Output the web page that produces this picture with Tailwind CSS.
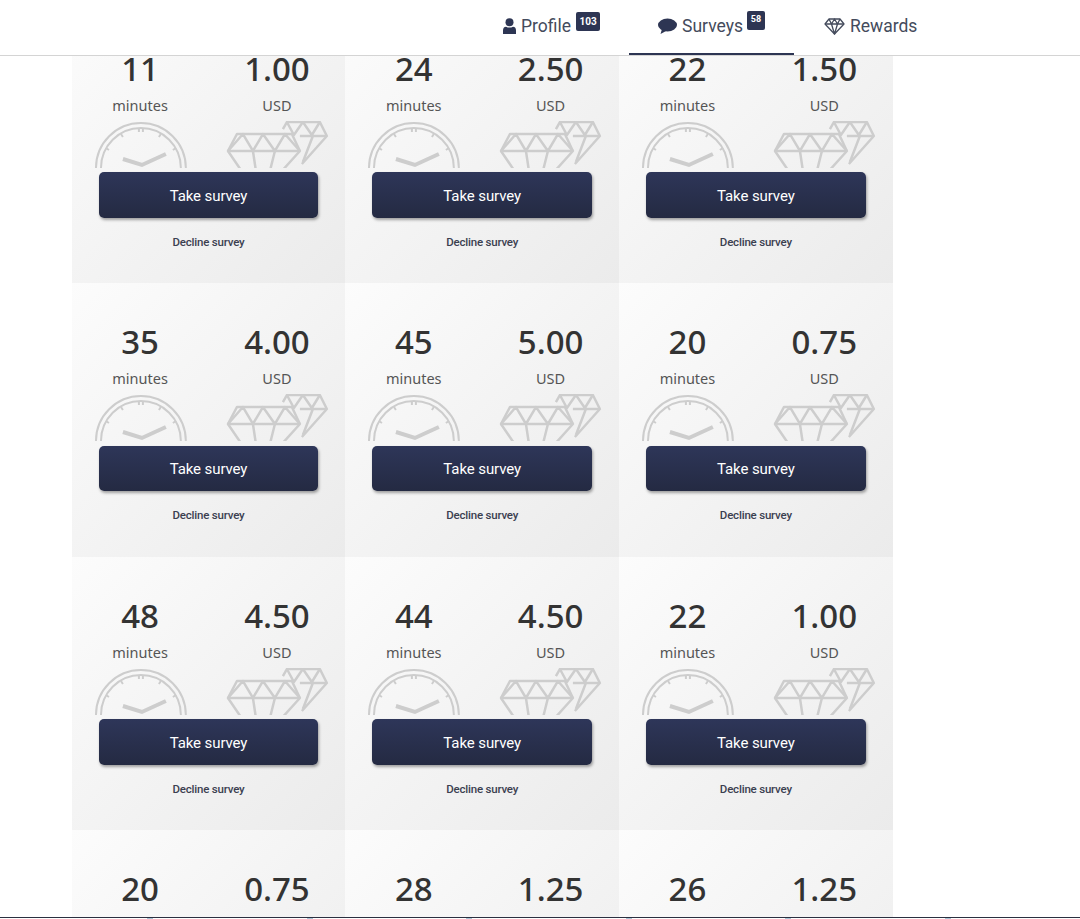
<!DOCTYPE html>
<html>
<head>
<meta charset="UTF-8">
<title>Surveys</title>
<script src="https://cdn.jsdelivr.net/npm/@tailwindcss/browser@4"></script>
</head>
<body class="bg-white font-['Noto_Sans',sans-serif] text-[#333] h-[919px] overflow-hidden">
<svg width="0" height="0" class="absolute">
  <symbol id="clock" viewBox="0 0 137 47">
    <g fill="none" stroke="#cdcdcd" stroke-width="2">
      <circle cx="69" cy="47" r="45"/>
      <circle cx="69" cy="47" r="40"/>
      <path d="M67 7v4M71 7v4M49 13l2 3M89 13l-2 3M34 27l3 2M104 27l-3 2"/>
      <path d="M51 38l19 6 24-11" stroke-width="4"/>
    </g>
  </symbol>
  <symbol id="gems" viewBox="0 0 137 47">
    <g fill="none" stroke="#cdcdcd" stroke-width="2.500" stroke-linejoin="round">
      <path d="M28 13H83L91 30H19Z"/>
      <path d="M19 30L34 13L44 30L54 13L66 30L76 13L91 30"/>
      <path d="M19 30L36 55M44 30L47 50M66 30L61 50M91 30L73 50"/>
      <path d="M74 8L78 1H111L118 15L93 43"/>
      <path d="M78 1L85 14L94 1L103 14L111 1M91 15H118M104 15L94 41"/>
    </g>
  </symbol>
</svg>

<!-- top nav sits over the scrolled list -->
<nav class="absolute top-0 left-0 z-10 w-full h-[56px] bg-white border-b border-[#d4d4d4] flex pl-[474px] text-[17.5px] text-[#444b5c] font-['Roboto',sans-serif]">
  <a class="h-[55px] pb-[3px] px-[29px] flex items-center">
    <svg class="w-[13px] h-[16px] mr-[5px]" viewBox="0 0 13 16" fill="#2d3553"><circle cx="6.500" cy="4.200" r="4"/><path d="M0 16V12.500Q0 9 3 8.700Q6.500 10.500 10 8.700Q13 9 13 12.500V16Z"/></svg>
    <span>Profile</span>
    <span class="ml-[5px] mb-[9px] w-[24px] h-[19px] rounded-[2px] bg-[#2d3553] text-white text-[10px] font-bold flex items-center justify-center">103</span>
  </a>
  <a class="relative h-[55px] pb-[3px] px-[29px] flex items-center">
    <svg class="w-[19px] h-[16px] mr-[5px]" viewBox="0 0 19 16" fill="#2d3553"><ellipse cx="9.500" cy="7" rx="9.500" ry="6.500"/><path d="M4 11L2.500 16L9 12.500Z"/></svg>
    <span>Surveys</span>
    <span class="ml-[4px] mb-[12px] w-[18px] h-[19px] rounded-[2px] bg-[#2d3553] text-white text-[9px] font-bold flex items-center justify-center">58</span>
    <span class="absolute left-0 right-0 bottom-0 h-[2px] bg-[#2d3553]"></span>
  </a>
  <a class="h-[55px] pb-[3px] pl-[30px] flex items-center">
    <svg class="w-[21px] h-[17px] mr-[5px]" viewBox="0 0 21 17" fill="none" stroke="#444b5c" stroke-width="1.300" stroke-linejoin="round"><path d="M5 1H16L20 6L10.500 16L1 6Z"/><path d="M1 6H20M7.500 6L10.500 16L13.500 6L10.500 1L7.500 6M5 1L7.500 6M16 1L13.500 6"/></svg>
    <span>Rewards</span>
  </a>
</nav>

<main class="h-[918px] overflow-hidden pt-[9.5px] pl-[71.7px] border-b border-[#2b3040]">
  <div class="grid grid-cols-3 w-[821px]">

    <div class="h-[273.67px] pt-[36px] bg-linear-to-br from-[#fcfcfc] to-[#ebebeb]">
      <div class="grid grid-cols-2 text-center">
        <div><div class="text-[33px] leading-[46px] font-medium">11</div><div class="mt-[2px] text-[14.5px] leading-[22px] text-[#555]">minutes</div><svg class="mt-[5px] w-full h-[47px]"><use href="#clock"/></svg></div>
        <div><div class="text-[33px] leading-[46px] font-medium">1.00</div><div class="mt-[2px] text-[14.5px] leading-[22px] text-[#555]">USD</div><svg class="mt-[5px] w-full h-[47px]"><use href="#gems"/></svg></div>
      </div>
      <div class="mt-[4.5px] mx-auto pt-[2px] w-[219.500px] h-[45.500px] rounded-[5px] bg-linear-to-b from-[#2e3659] to-[#242a42] shadow-[1px_2px_3px_rgba(0,0,0,0.35)] text-white text-[15px] tracking-[-0.1px] font-['Roboto',sans-serif] flex items-center justify-center">Take survey</div>
      <div class="mt-[13px] text-center text-[11.5px] leading-[22px] font-medium tracking-[-0.2px] text-[#3b4050] font-['Roboto',sans-serif]">Decline survey</div>
    </div>
    <div class="h-[273.67px] pt-[36px] bg-linear-to-br from-[#fcfcfc] to-[#ebebeb]">
      <div class="grid grid-cols-2 text-center">
        <div><div class="text-[33px] leading-[46px] font-medium">24</div><div class="mt-[2px] text-[14.5px] leading-[22px] text-[#555]">minutes</div><svg class="mt-[5px] w-full h-[47px]"><use href="#clock"/></svg></div>
        <div><div class="text-[33px] leading-[46px] font-medium">2.50</div><div class="mt-[2px] text-[14.5px] leading-[22px] text-[#555]">USD</div><svg class="mt-[5px] w-full h-[47px]"><use href="#gems"/></svg></div>
      </div>
      <div class="mt-[4.5px] mx-auto pt-[2px] w-[219.500px] h-[45.500px] rounded-[5px] bg-linear-to-b from-[#2e3659] to-[#242a42] shadow-[1px_2px_3px_rgba(0,0,0,0.35)] text-white text-[15px] tracking-[-0.1px] font-['Roboto',sans-serif] flex items-center justify-center">Take survey</div>
      <div class="mt-[13px] text-center text-[11.5px] leading-[22px] font-medium tracking-[-0.2px] text-[#3b4050] font-['Roboto',sans-serif]">Decline survey</div>
    </div>
    <div class="h-[273.67px] pt-[36px] bg-linear-to-br from-[#fcfcfc] to-[#ebebeb]">
      <div class="grid grid-cols-2 text-center">
        <div><div class="text-[33px] leading-[46px] font-medium">22</div><div class="mt-[2px] text-[14.5px] leading-[22px] text-[#555]">minutes</div><svg class="mt-[5px] w-full h-[47px]"><use href="#clock"/></svg></div>
        <div><div class="text-[33px] leading-[46px] font-medium">1.50</div><div class="mt-[2px] text-[14.5px] leading-[22px] text-[#555]">USD</div><svg class="mt-[5px] w-full h-[47px]"><use href="#gems"/></svg></div>
      </div>
      <div class="mt-[4.5px] mx-auto pt-[2px] w-[219.500px] h-[45.500px] rounded-[5px] bg-linear-to-b from-[#2e3659] to-[#242a42] shadow-[1px_2px_3px_rgba(0,0,0,0.35)] text-white text-[15px] tracking-[-0.1px] font-['Roboto',sans-serif] flex items-center justify-center">Take survey</div>
      <div class="mt-[13px] text-center text-[11.5px] leading-[22px] font-medium tracking-[-0.2px] text-[#3b4050] font-['Roboto',sans-serif]">Decline survey</div>
    </div>

    <div class="h-[273.67px] pt-[36px] bg-linear-to-br from-[#fcfcfc] to-[#ebebeb]">
      <div class="grid grid-cols-2 text-center">
        <div><div class="text-[33px] leading-[46px] font-medium">35</div><div class="mt-[2px] text-[14.5px] leading-[22px] text-[#555]">minutes</div><svg class="mt-[5px] w-full h-[47px]"><use href="#clock"/></svg></div>
        <div><div class="text-[33px] leading-[46px] font-medium">4.00</div><div class="mt-[2px] text-[14.5px] leading-[22px] text-[#555]">USD</div><svg class="mt-[5px] w-full h-[47px]"><use href="#gems"/></svg></div>
      </div>
      <div class="mt-[4.5px] mx-auto pt-[2px] w-[219.500px] h-[45.500px] rounded-[5px] bg-linear-to-b from-[#2e3659] to-[#242a42] shadow-[1px_2px_3px_rgba(0,0,0,0.35)] text-white text-[15px] tracking-[-0.1px] font-['Roboto',sans-serif] flex items-center justify-center">Take survey</div>
      <div class="mt-[13px] text-center text-[11.5px] leading-[22px] font-medium tracking-[-0.2px] text-[#3b4050] font-['Roboto',sans-serif]">Decline survey</div>
    </div>
    <div class="h-[273.67px] pt-[36px] bg-linear-to-br from-[#fcfcfc] to-[#ebebeb]">
      <div class="grid grid-cols-2 text-center">
        <div><div class="text-[33px] leading-[46px] font-medium">45</div><div class="mt-[2px] text-[14.5px] leading-[22px] text-[#555]">minutes</div><svg class="mt-[5px] w-full h-[47px]"><use href="#clock"/></svg></div>
        <div><div class="text-[33px] leading-[46px] font-medium">5.00</div><div class="mt-[2px] text-[14.5px] leading-[22px] text-[#555]">USD</div><svg class="mt-[5px] w-full h-[47px]"><use href="#gems"/></svg></div>
      </div>
      <div class="mt-[4.5px] mx-auto pt-[2px] w-[219.500px] h-[45.500px] rounded-[5px] bg-linear-to-b from-[#2e3659] to-[#242a42] shadow-[1px_2px_3px_rgba(0,0,0,0.35)] text-white text-[15px] tracking-[-0.1px] font-['Roboto',sans-serif] flex items-center justify-center">Take survey</div>
      <div class="mt-[13px] text-center text-[11.5px] leading-[22px] font-medium tracking-[-0.2px] text-[#3b4050] font-['Roboto',sans-serif]">Decline survey</div>
    </div>
    <div class="h-[273.67px] pt-[36px] bg-linear-to-br from-[#fcfcfc] to-[#ebebeb]">
      <div class="grid grid-cols-2 text-center">
        <div><div class="text-[33px] leading-[46px] font-medium">20</div><div class="mt-[2px] text-[14.5px] leading-[22px] text-[#555]">minutes</div><svg class="mt-[5px] w-full h-[47px]"><use href="#clock"/></svg></div>
        <div><div class="text-[33px] leading-[46px] font-medium">0.75</div><div class="mt-[2px] text-[14.5px] leading-[22px] text-[#555]">USD</div><svg class="mt-[5px] w-full h-[47px]"><use href="#gems"/></svg></div>
      </div>
      <div class="mt-[4.5px] mx-auto pt-[2px] w-[219.500px] h-[45.500px] rounded-[5px] bg-linear-to-b from-[#2e3659] to-[#242a42] shadow-[1px_2px_3px_rgba(0,0,0,0.35)] text-white text-[15px] tracking-[-0.1px] font-['Roboto',sans-serif] flex items-center justify-center">Take survey</div>
      <div class="mt-[13px] text-center text-[11.5px] leading-[22px] font-medium tracking-[-0.2px] text-[#3b4050] font-['Roboto',sans-serif]">Decline survey</div>
    </div>

    <div class="h-[273.67px] pt-[36px] bg-linear-to-br from-[#fcfcfc] to-[#ebebeb]">
      <div class="grid grid-cols-2 text-center">
        <div><div class="text-[33px] leading-[46px] font-medium">48</div><div class="mt-[2px] text-[14.5px] leading-[22px] text-[#555]">minutes</div><svg class="mt-[5px] w-full h-[47px]"><use href="#clock"/></svg></div>
        <div><div class="text-[33px] leading-[46px] font-medium">4.50</div><div class="mt-[2px] text-[14.5px] leading-[22px] text-[#555]">USD</div><svg class="mt-[5px] w-full h-[47px]"><use href="#gems"/></svg></div>
      </div>
      <div class="mt-[4.5px] mx-auto pt-[2px] w-[219.500px] h-[45.500px] rounded-[5px] bg-linear-to-b from-[#2e3659] to-[#242a42] shadow-[1px_2px_3px_rgba(0,0,0,0.35)] text-white text-[15px] tracking-[-0.1px] font-['Roboto',sans-serif] flex items-center justify-center">Take survey</div>
      <div class="mt-[13px] text-center text-[11.5px] leading-[22px] font-medium tracking-[-0.2px] text-[#3b4050] font-['Roboto',sans-serif]">Decline survey</div>
    </div>
    <div class="h-[273.67px] pt-[36px] bg-linear-to-br from-[#fcfcfc] to-[#ebebeb]">
      <div class="grid grid-cols-2 text-center">
        <div><div class="text-[33px] leading-[46px] font-medium">44</div><div class="mt-[2px] text-[14.5px] leading-[22px] text-[#555]">minutes</div><svg class="mt-[5px] w-full h-[47px]"><use href="#clock"/></svg></div>
        <div><div class="text-[33px] leading-[46px] font-medium">4.50</div><div class="mt-[2px] text-[14.5px] leading-[22px] text-[#555]">USD</div><svg class="mt-[5px] w-full h-[47px]"><use href="#gems"/></svg></div>
      </div>
      <div class="mt-[4.5px] mx-auto pt-[2px] w-[219.500px] h-[45.500px] rounded-[5px] bg-linear-to-b from-[#2e3659] to-[#242a42] shadow-[1px_2px_3px_rgba(0,0,0,0.35)] text-white text-[15px] tracking-[-0.1px] font-['Roboto',sans-serif] flex items-center justify-center">Take survey</div>
      <div class="mt-[13px] text-center text-[11.5px] leading-[22px] font-medium tracking-[-0.2px] text-[#3b4050] font-['Roboto',sans-serif]">Decline survey</div>
    </div>
    <div class="h-[273.67px] pt-[36px] bg-linear-to-br from-[#fcfcfc] to-[#ebebeb]">
      <div class="grid grid-cols-2 text-center">
        <div><div class="text-[33px] leading-[46px] font-medium">22</div><div class="mt-[2px] text-[14.5px] leading-[22px] text-[#555]">minutes</div><svg class="mt-[5px] w-full h-[47px]"><use href="#clock"/></svg></div>
        <div><div class="text-[33px] leading-[46px] font-medium">1.00</div><div class="mt-[2px] text-[14.5px] leading-[22px] text-[#555]">USD</div><svg class="mt-[5px] w-full h-[47px]"><use href="#gems"/></svg></div>
      </div>
      <div class="mt-[4.5px] mx-auto pt-[2px] w-[219.500px] h-[45.500px] rounded-[5px] bg-linear-to-b from-[#2e3659] to-[#242a42] shadow-[1px_2px_3px_rgba(0,0,0,0.35)] text-white text-[15px] tracking-[-0.1px] font-['Roboto',sans-serif] flex items-center justify-center">Take survey</div>
      <div class="mt-[13px] text-center text-[11.5px] leading-[22px] font-medium tracking-[-0.2px] text-[#3b4050] font-['Roboto',sans-serif]">Decline survey</div>
    </div>

    <div class="h-[273.67px] pt-[36px] bg-linear-to-br from-[#fcfcfc] to-[#ebebeb]">
      <div class="grid grid-cols-2 text-center">
        <div><div class="text-[33px] leading-[46px] font-medium">20</div></div>
        <div><div class="text-[33px] leading-[46px] font-medium">0.75</div></div>
      </div>
    </div>
    <div class="h-[273.67px] pt-[36px] bg-linear-to-br from-[#fcfcfc] to-[#ebebeb]">
      <div class="grid grid-cols-2 text-center">
        <div><div class="text-[33px] leading-[46px] font-medium">28</div></div>
        <div><div class="text-[33px] leading-[46px] font-medium">1.25</div></div>
      </div>
    </div>
    <div class="h-[273.67px] pt-[36px] bg-linear-to-br from-[#fcfcfc] to-[#ebebeb]">
      <div class="grid grid-cols-2 text-center">
        <div><div class="text-[33px] leading-[46px] font-medium">26</div></div>
        <div><div class="text-[33px] leading-[46px] font-medium">1.25</div></div>
      </div>
    </div>

  </div>
</main>

<!-- tops of the next thing on the page, just visible below the rule -->
<div class="flex pl-[147px] gap-[153.5px] h-[1px]">
  <span class="w-[6px] shrink-0 bg-[#a9c4d6]"></span>
  <span class="w-[6px] shrink-0 bg-[#a9c4d6]"></span>
  <span class="w-[6px] shrink-0 bg-[#a9c4d6]"></span>
  <span class="w-[6px] shrink-0 bg-[#a9c4d6]"></span>
  <span class="w-[6px] shrink-0 bg-[#a9c4d6]"></span>
  <span class="w-[6px] shrink-0 bg-[#a9c4d6]"></span>
</div>
</body>
</html>
